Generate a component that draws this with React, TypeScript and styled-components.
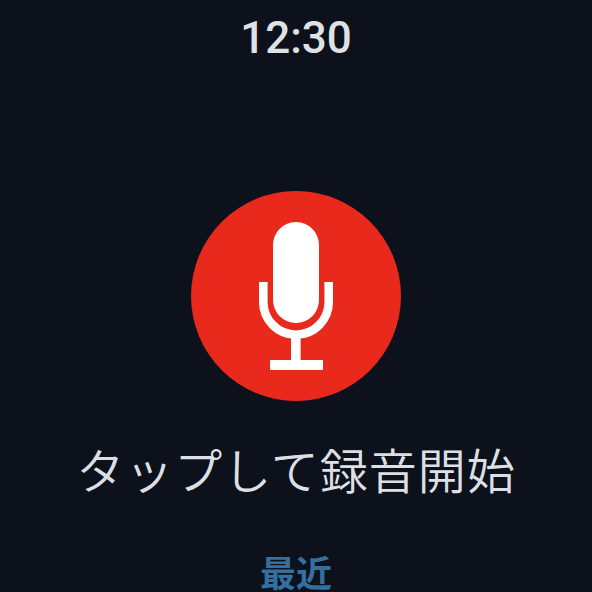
import styled, { createGlobalStyle } from 'styled-components'

const GlobalStyle = createGlobalStyle`
    html, body {
        margin: 0;
        padding: 0;
        background: #0c111b;
    }
`

function MicIcon() {
    return (
        <svg width="210" height="210" viewBox="0 0 210 210">
            <rect x="82" y="31" width="46" height="101" rx="23" fill="#fff" />
            <path d="M72.3 91 V111 A32.7 32.7 0 0 0 137.7 111 V91" fill="none" stroke="#fff" strokeWidth="8.6" />
            <rect x="100" y="145" width="9.6" height="25" fill="#fff" />
            <rect x="79" y="169" width="53" height="10" fill="#fff" />
        </svg>
    )
}

function App() {
    return (
        <Screen>
            <GlobalStyle />
            <Clock>12:30</Clock>
            <RecordButton>
                <MicIcon />
            </RecordButton>
            <Prompt>タップして録音開始</Prompt>
            <Recent>最近</Recent>
        </Screen>
    )
}

export default App

const Screen = styled.div`
    width: 592px;
    height: 592px;
    overflow: hidden;
    background: #0c111b;
    display: flex;
    flex-direction: column;
    align-items: center;
    font-family: "Noto Sans CJK JP", sans-serif;
`

const Clock = styled.div`
    margin-top: 12px;
    height: 52px;
    line-height: 52px;
    font-family: Roboto, sans-serif;
    font-size: 44px;
    font-weight: 500;
    color: #dfe1e4;
`

const RecordButton = styled.div`
    margin-top: 127px;
    width: 210px;
    height: 210px;
    border-radius: 50%;
    background: #e8291c;
    flex-shrink: 0;
`

const Prompt = styled.div`
    margin-top: 32px;
    height: 70px;
    line-height: 70px;
    font-size: 48px;
    font-weight: 350;
    letter-spacing: 1px;
    white-space: nowrap;
    color: #dcdfe3;
`

const Recent = styled.div`
    margin-top: 43px;
    height: 50px;
    line-height: 50px;
    font-size: 36px;
    font-weight: 700;
    color: #33709f;
`
